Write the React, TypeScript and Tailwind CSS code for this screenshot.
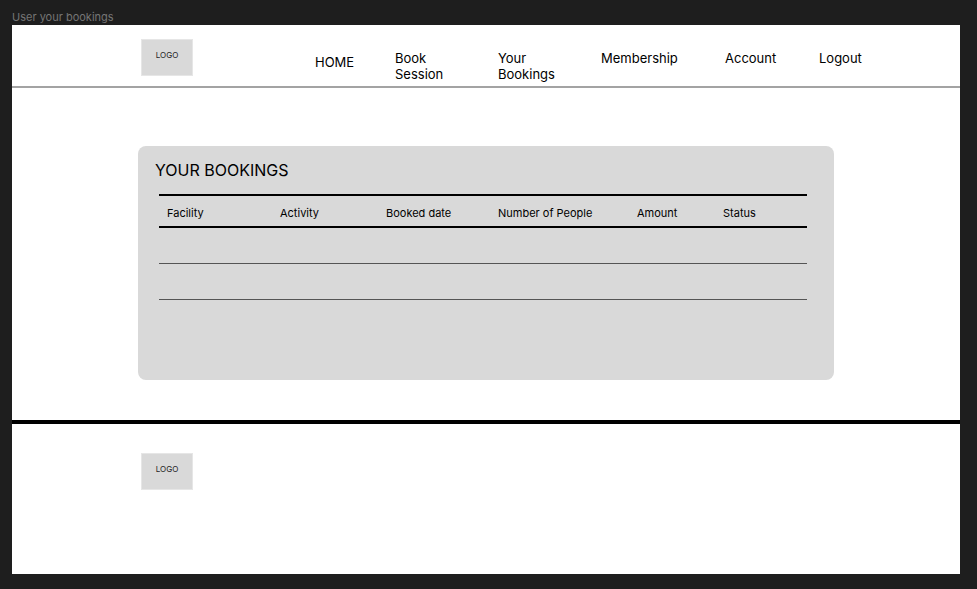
const navItems = ["HOME", "Book Session", "Your Bookings", "Membership", "Account", "Logout"];

const columns = [
  { label: "Facility", width: "w-[113px]" },
  { label: "Activity", width: "w-[106px]" },
  { label: "Booked date", width: "w-[112px]" },
  { label: "Number of People", width: "w-[139px]" },
  { label: "Amount", width: "w-[86px]" },
  { label: "Status", width: "w-[92px]" },
];

function Logo() {
  return (
    <a
      href="#"
      className="flex h-[37px] w-[52px] shrink-0 justify-center border border-[#e6e6e6] bg-[#d9d9d9] pt-[10px] text-[8px] leading-[10px] text-[#1e1e1e]"
    >
      LOGO
    </a>
  );
}

function Header() {
  return (
    <header className="flex h-[63px] items-start border-b-2 border-[#a3a3a3] pt-[14px] pr-[90px] pl-[129px]">
      <Logo />
      <nav className="ml-[122px] grid flex-1 grid-cols-[80fr_103fr_103fr_124fr_94fr_51fr] pt-[11px] text-[13px] leading-4">
        {navItems.map((item) => (
          <a key={item} href="#" className={item === "HOME" ? "pt-1" : ""}>
            <span className={item.includes(" ") ? "block w-16" : "block"}>{item}</span>
          </a>
        ))}
      </nav>
    </header>
  );
}

function Bookings() {
  return (
    <section className="min-h-[234px] rounded-lg bg-[#d9d9d9] pt-3 pr-7 pb-20 pl-[17px]">
      <h1 className="text-[16px] leading-6">YOUR BOOKINGS</h1>
      <div className="mt-3 pl-1">
        <table className="w-full table-fixed border-separate border-spacing-0 text-left text-[11px] leading-[14px]">
          <thead>
            <tr>
              {columns.map(({ label, width }) => (
                <th
                  key={label}
                  scope="col"
                  className={`${width} h-[34px] border-y-2 border-black p-0 pt-[3px] pl-2 font-normal whitespace-nowrap`}
                >
                  {label}
                </th>
              ))}
            </tr>
          </thead>
          <tbody>
            {[0, 1].map((row) => (
              <tr key={row}>
                {columns.map(({ label }) => (
                  <td key={label} className="h-9 border-b border-[#555555] p-0" />
                ))}
              </tr>
            ))}
          </tbody>
        </table>
      </div>
    </section>
  );
}

export default function App() {
  return (
    <div className="min-h-screen bg-[#1e1e1e] pt-[10px] pr-[17px] pb-[15px] pl-3 font-['Inter','Liberation_Sans',sans-serif] text-black">
      <p className="text-[11px] leading-[15px] text-[#757575]">User your bookings</p>
      <div className="bg-white">
        <Header />
        <main className="border-b-4 border-black px-[126px] pt-[58px] pb-10">
          <Bookings />
        </main>
        <footer className="min-h-[150px] pt-[29px] pl-[129px]">
          <Logo />
        </footer>
      </div>
    </div>
  );
}
